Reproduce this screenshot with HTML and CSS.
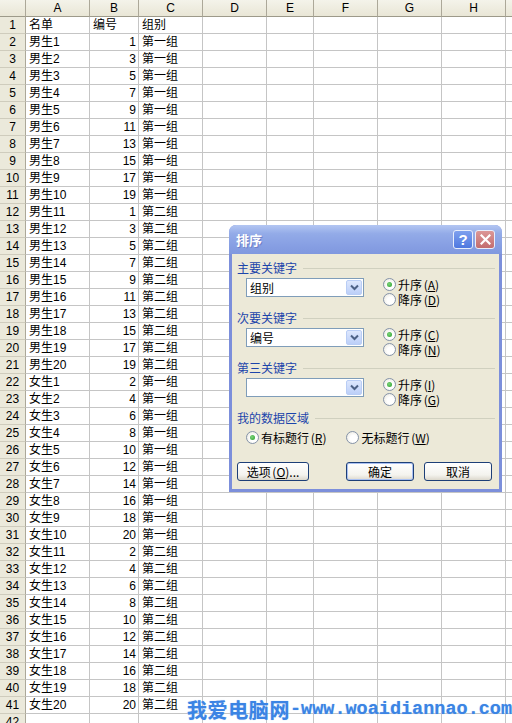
FILE: index.html
```html
<!DOCTYPE html>
<html lang="zh-CN">
<head>
<meta charset="utf-8">
<title>排序</title>
<link rel="stylesheet" href="styles.css">
</head>
<body>
<div class="page">
  <div class="sheet">
    <div class="hdr"><span></span><span>A</span><span>B</span><span>C</span><span>D</span><span>E</span><span>F</span><span>G</span><span>H</span><span></span></div>
    <div class="row"><span class="rh">1</span><span>名单</span><span>编号</span><span>组别</span><span class="rest"></span></div>
    <div class="row"><span class="rh">2</span><span>男生1</span><span class="n">1</span><span>第一组</span><span class="rest"></span></div>
    <div class="row"><span class="rh">3</span><span>男生2</span><span class="n">3</span><span>第一组</span><span class="rest"></span></div>
    <div class="row"><span class="rh">4</span><span>男生3</span><span class="n">5</span><span>第一组</span><span class="rest"></span></div>
    <div class="row"><span class="rh">5</span><span>男生4</span><span class="n">7</span><span>第一组</span><span class="rest"></span></div>
    <div class="row"><span class="rh">6</span><span>男生5</span><span class="n">9</span><span>第一组</span><span class="rest"></span></div>
    <div class="row"><span class="rh">7</span><span>男生6</span><span class="n">11</span><span>第一组</span><span class="rest"></span></div>
    <div class="row"><span class="rh">8</span><span>男生7</span><span class="n">13</span><span>第一组</span><span class="rest"></span></div>
    <div class="row"><span class="rh">9</span><span>男生8</span><span class="n">15</span><span>第一组</span><span class="rest"></span></div>
    <div class="row"><span class="rh">10</span><span>男生9</span><span class="n">17</span><span>第一组</span><span class="rest"></span></div>
    <div class="row"><span class="rh">11</span><span>男生10</span><span class="n">19</span><span>第一组</span><span class="rest"></span></div>
    <div class="row"><span class="rh">12</span><span>男生11</span><span class="n">1</span><span>第二组</span><span class="rest"></span></div>
    <div class="row"><span class="rh">13</span><span>男生12</span><span class="n">3</span><span>第二组</span><span class="rest"></span></div>
    <div class="row"><span class="rh">14</span><span>男生13</span><span class="n">5</span><span>第二组</span><span class="rest"></span></div>
    <div class="row"><span class="rh">15</span><span>男生14</span><span class="n">7</span><span>第二组</span><span class="rest"></span></div>
    <div class="row"><span class="rh">16</span><span>男生15</span><span class="n">9</span><span>第二组</span><span class="rest"></span></div>
    <div class="row"><span class="rh">17</span><span>男生16</span><span class="n">11</span><span>第二组</span><span class="rest"></span></div>
    <div class="row"><span class="rh">18</span><span>男生17</span><span class="n">13</span><span>第二组</span><span class="rest"></span></div>
    <div class="row"><span class="rh">19</span><span>男生18</span><span class="n">15</span><span>第二组</span><span class="rest"></span></div>
    <div class="row"><span class="rh">20</span><span>男生19</span><span class="n">17</span><span>第二组</span><span class="rest"></span></div>
    <div class="row"><span class="rh">21</span><span>男生20</span><span class="n">19</span><span>第二组</span><span class="rest"></span></div>
    <div class="row"><span class="rh">22</span><span>女生1</span><span class="n">2</span><span>第一组</span><span class="rest"></span></div>
    <div class="row"><span class="rh">23</span><span>女生2</span><span class="n">4</span><span>第一组</span><span class="rest"></span></div>
    <div class="row"><span class="rh">24</span><span>女生3</span><span class="n">6</span><span>第一组</span><span class="rest"></span></div>
    <div class="row"><span class="rh">25</span><span>女生4</span><span class="n">8</span><span>第一组</span><span class="rest"></span></div>
    <div class="row"><span class="rh">26</span><span>女生5</span><span class="n">10</span><span>第一组</span><span class="rest"></span></div>
    <div class="row"><span class="rh">27</span><span>女生6</span><span class="n">12</span><span>第一组</span><span class="rest"></span></div>
    <div class="row"><span class="rh">28</span><span>女生7</span><span class="n">14</span><span>第一组</span><span class="rest"></span></div>
    <div class="row"><span class="rh">29</span><span>女生8</span><span class="n">16</span><span>第一组</span><span class="rest"></span></div>
    <div class="row"><span class="rh">30</span><span>女生9</span><span class="n">18</span><span>第一组</span><span class="rest"></span></div>
    <div class="row"><span class="rh">31</span><span>女生10</span><span class="n">20</span><span>第一组</span><span class="rest"></span></div>
    <div class="row"><span class="rh">32</span><span>女生11</span><span class="n">2</span><span>第二组</span><span class="rest"></span></div>
    <div class="row"><span class="rh">33</span><span>女生12</span><span class="n">4</span><span>第二组</span><span class="rest"></span></div>
    <div class="row"><span class="rh">34</span><span>女生13</span><span class="n">6</span><span>第二组</span><span class="rest"></span></div>
    <div class="row"><span class="rh">35</span><span>女生14</span><span class="n">8</span><span>第二组</span><span class="rest"></span></div>
    <div class="row"><span class="rh">36</span><span>女生15</span><span class="n">10</span><span>第二组</span><span class="rest"></span></div>
    <div class="row"><span class="rh">37</span><span>女生16</span><span class="n">12</span><span>第二组</span><span class="rest"></span></div>
    <div class="row"><span class="rh">38</span><span>女生17</span><span class="n">14</span><span>第二组</span><span class="rest"></span></div>
    <div class="row"><span class="rh">39</span><span>女生18</span><span class="n">16</span><span>第二组</span><span class="rest"></span></div>
    <div class="row"><span class="rh">40</span><span>女生19</span><span class="n">18</span><span>第二组</span><span class="rest"></span></div>
    <div class="row"><span class="rh">41</span><span>女生20</span><span class="n">20</span><span>第二组</span><span class="rest"></span></div>
    <div class="row"><span class="rh">42</span><span></span><span class="n"></span><span></span><span class="rest"></span></div>
  </div>

  <div class="dlg">
    <div class="tbar">
      <span class="ttl">排序</span>
      <span class="tb help">?</span>
      <span class="tb close"><svg width="11" height="11" viewBox="0 0 11 11"><path d="M1.5 1.5 L9.5 9.5 M9.5 1.5 L1.5 9.5" stroke="#fff" stroke-width="2.2" stroke-linecap="square"/></svg></span>
    </div>
    <div class="body">
      <div class="sec">
        <div class="lbl">主要关键字</div>
        <div class="krow">
          <div class="sel"><span class="val">组别</span><span class="dd"><svg width="9" height="7" viewBox="0 0 9 7"><path d="M1 1.5 L4.5 5 L8 1.5" fill="none" stroke="#4d6185" stroke-width="2"/></svg></span></div>
          <div class="radios">
            <div class="rad on"><span class="dot"></span>升序 (<u>A</u>)</div>
            <div class="rad"><span class="dot"></span>降序 (<u>D</u>)</div>
          </div>
        </div>
      </div>
      <div class="sec">
        <div class="lbl">次要关键字</div>
        <div class="krow">
          <div class="sel"><span class="val">编号</span><span class="dd"><svg width="9" height="7" viewBox="0 0 9 7"><path d="M1 1.5 L4.5 5 L8 1.5" fill="none" stroke="#4d6185" stroke-width="2"/></svg></span></div>
          <div class="radios">
            <div class="rad on"><span class="dot"></span>升序 (<u>C</u>)</div>
            <div class="rad"><span class="dot"></span>降序 (<u>N</u>)</div>
          </div>
        </div>
      </div>
      <div class="sec">
        <div class="lbl">第三关键字</div>
        <div class="krow">
          <div class="sel"><span class="val"></span><span class="dd"><svg width="9" height="7" viewBox="0 0 9 7"><path d="M1 1.5 L4.5 5 L8 1.5" fill="none" stroke="#4d6185" stroke-width="2"/></svg></span></div>
          <div class="radios">
            <div class="rad on"><span class="dot"></span>升序 (<u>I</u>)</div>
            <div class="rad"><span class="dot"></span>降序 (<u>G</u>)</div>
          </div>
        </div>
      </div>
      <div class="lbl">我的数据区域</div>
      <div class="datarow">
        <div class="rad on"><span class="dot"></span>有标题行 (<u>R</u>)</div>
        <div class="rad"><span class="dot"></span>无标题行 (<u>W</u>)</div>
      </div>
      <div class="btns">
        <span class="btn opt">选项 (<u>O</u>)...</span>
        <span class="btn ok">确定</span>
        <span class="btn cancel">取消</span>
      </div>
    </div>
  </div>

  <div class="wm"><span class="cn">我爱电脑网</span><span class="en">-www.woaidiannao.com</span></div>
</div>
</body>
</html>
```

FILE: styles.css
```css
html, body {
  margin: 0;
  padding: 0;
  background: #fff;
}
body {
  font-family: "Liberation Sans", "Noto Sans CJK SC", sans-serif;
  font-size: 12px;
  color: #000;
}
.page {
  position: relative;
  width: 512px;
  height: 723px;
  overflow: hidden;
}

/* spreadsheet */
.hdr {
  display: grid;
  grid-template-columns: 26px 64px 49px 64px 64px 47px 64px 64px 64px 64px;
  height: 17px;
}
.hdr > span {
  box-sizing: border-box;
  background: linear-gradient(#f4f3ea, #e9e6d6);
  border-right: 1px solid #aca899;
  border-bottom: 1px solid #9d9a8a;
  text-align: center;
  line-height: 16px;
  font-family: "Liberation Sans", sans-serif;
  font-size: 12px;
}
.row {
  display: grid;
  grid-template-columns: 26px 64px 49px 64px 1fr;
  height: 17px;
}
.row > span {
  box-sizing: border-box;
  border-right: 1px solid #c5c5c5;
  border-bottom: 1px solid #c5c5c5;
  line-height: 16px;
  padding: 0 2px 0 3px;
  white-space: nowrap;
  overflow: hidden;
  font-family: "Liberation Sans", "Noto Sans CJK SC", sans-serif;
}
.row > .rh {
  background: #ebe9db;
  border-right-color: #aca899;
  border-bottom-color: #cfccbd;
  text-align: center;
  padding: 0;
  font-family: "Liberation Sans", sans-serif;
}
.row > .n {
  text-align: right;
  padding-right: 2px;
}
.row > .rest {
  border-right: 0;
  padding: 0;
  background-image:
    linear-gradient(#c5c5c5, #c5c5c5),
    linear-gradient(#c5c5c5, #c5c5c5),
    linear-gradient(#c5c5c5, #c5c5c5),
    linear-gradient(#c5c5c5, #c5c5c5),
    linear-gradient(#c5c5c5, #c5c5c5);
  background-size: 1px 100%;
  background-repeat: no-repeat;
  background-position: 63px 0, 110px 0, 174px 0, 238px 0, 302px 0;
}

/* dialog */
.dlg {
  position: absolute;
  left: 229px;
  top: 225px;
  width: 273px;
  height: 267px;
  box-sizing: border-box;
  background: #7c8fdb;
  border-radius: 7px 7px 0 0;
  padding: 0 3px 3px;
  display: flex;
  flex-direction: column;
  font-family: "Noto Sans CJK SC", sans-serif;
  font-size: 12px;
}
.tbar {
  flex: none;
  height: 29px;
  margin: 0 -3px;
  padding: 0 7px 0 7px;
  display: flex;
  align-items: center;
  background: linear-gradient(#b3c6f2, #93abe8 30%, #879fe3 70%, #8098df);
  border-radius: 7px 7px 0 0;
}
.ttl {
  flex: 1;
  color: #fff;
  font-weight: bold;
  font-size: 13px;
  text-shadow: 1px 1px 0 #6d80c8;
}
.tb {
  width: 20px;
  height: 19px;
  box-sizing: border-box;
  border: 1px solid #e8eefc;
  border-radius: 3px;
  display: flex;
  align-items: center;
  justify-content: center;
}
.help {
  background: linear-gradient(#7ea0ee, #4f78e0);
  color: #fff;
  font-family: "Liberation Sans", sans-serif;
  font-weight: bold;
  font-size: 15px;
}
.close {
  margin-left: 2px;
  background: linear-gradient(#dc9797, #c36d6f);
}
.body {
  flex: 1;
  background: #ece9d8;
  padding: 7px 0 0 5px;
}
.sec {
  margin-bottom: 4px;
}
.lbl {
  display: flex;
  align-items: center;
  height: 14px;
  line-height: 14px;
  color: #1c45ab;
  white-space: nowrap;
}
.lbl::after {
  content: "";
  flex: 1;
  height: 1px;
  margin: 0 4px 0 6px;
  background: #d0d0bf;
}
.krow {
  display: flex;
  height: 30px;
  margin-top: 2px;
}
.sel {
  margin: 1px 0 0 9px;
  width: 118px;
  height: 19px;
  box-sizing: border-box;
  border: 1px solid #7f9db9;
  background: #fff;
  display: flex;
  align-items: center;
  padding: 0 1px 0 3px;
}
.val {
  flex: 1;
  line-height: 15px;
}
.dd {
  width: 16px;
  height: 15px;
  box-sizing: border-box;
  border: 1px solid #b9cdf5;
  border-radius: 2px;
  background: linear-gradient(#dde7fd, #bccff8);
  display: flex;
  align-items: center;
  justify-content: center;
}
.radios {
  margin-left: 19px;
  display: flex;
  flex-direction: column;
}
.rad {
  display: flex;
  align-items: center;
  height: 15px;
  line-height: 15px;
  white-space: nowrap;
  word-spacing: -1px;
}
.rad u {
  text-decoration: underline;
}
.dot {
  position: relative;
  flex: none;
  width: 13px;
  height: 13px;
  box-sizing: border-box;
  margin-right: 2px;
  border: 1px solid #8593a8;
  border-radius: 50%;
  background: radial-gradient(circle at 60% 60%, #fff 35%, #e6e3d8);
}
.on .dot::after {
  content: "";
  position: absolute;
  left: 3px;
  top: 3px;
  width: 5px;
  height: 5px;
  border-radius: 50%;
  background: radial-gradient(circle at 40% 40%, #7fd27f, #22a022);
}
.datarow {
  display: flex;
  gap: 20px;
  margin: 5px 0 0 9px;
}
.btns {
  display: flex;
  margin-top: 17px;
  padding-right: 7px;
}
.btn {
  height: 19px;
  line-height: 17px;
  box-sizing: border-box;
  border: 1px solid #1d3f77;
  border-radius: 3px;
  background: linear-gradient(#ffffff, #f4f3ee 70%, #dcd8cc);
  display: flex;
  align-items: center;
  justify-content: center;
  white-space: nowrap;
}
.opt {
  width: 72px;
  word-spacing: -1px;
}
.ok {
  width: 68px;
  margin-left: auto;
  box-shadow: inset 0 0 0 1px #a9c0f2;
}
.cancel {
  width: 68px;
  margin-left: 10px;
}

/* watermark */
.wm {
  position: absolute;
  left: 187px;
  top: 698px;
  height: 24px;
  display: flex;
  align-items: center;
  white-space: nowrap;
  color: #3b84e4;
  font-weight: bold;
  text-shadow: 0 0 1px #9cc4f4;
}
.wm .cn {
  font-family: "Noto Sans CJK SC", sans-serif;
  font-size: 20px;
  letter-spacing: 0.6px;
  line-height: 24px;
}
.wm .en {
  font-family: "Liberation Mono", monospace;
  font-size: 18.5px;
  line-height: 24px;
}
```
